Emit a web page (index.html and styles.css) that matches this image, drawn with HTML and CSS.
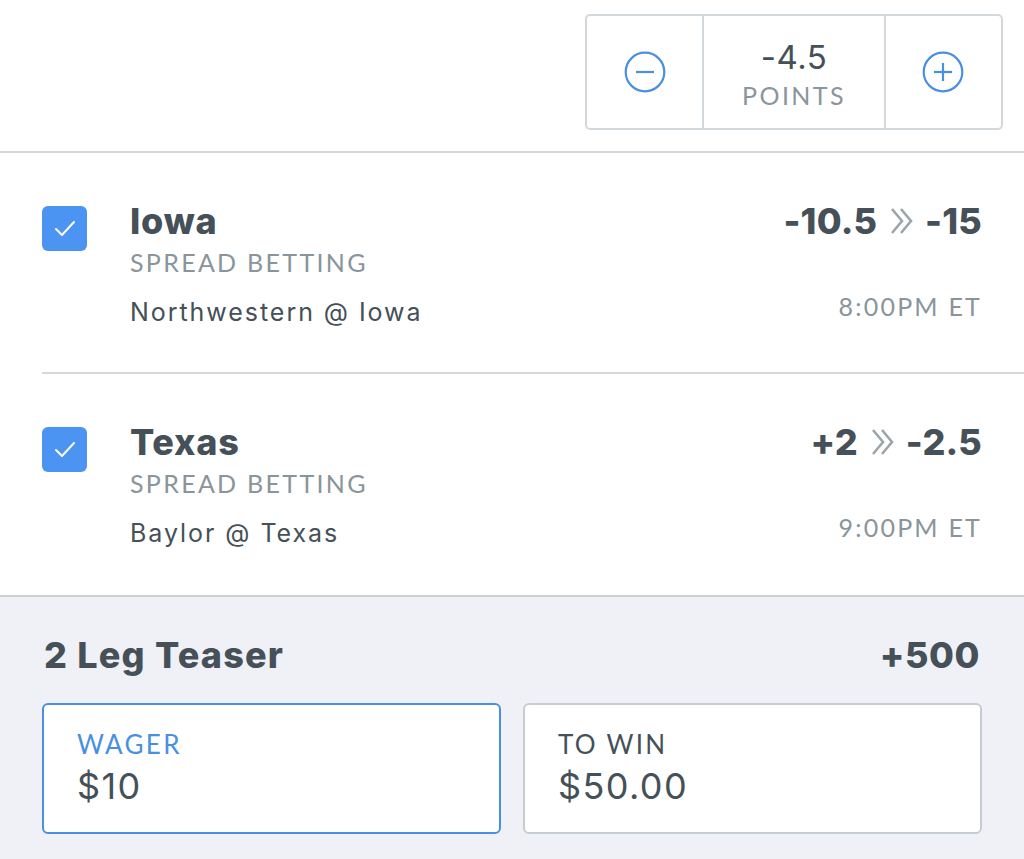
FILE: index.html
```html
<!DOCTYPE html>
<html>
<head>
<meta charset="utf-8">
<link rel="stylesheet" href="styles.css">
</head>
<body>
<div class="page">
  <header class="top">
    <div class="stepper">
      <div class="step-btn">
        <svg width="42" height="42" viewBox="0 0 42 42"><circle cx="21" cy="21" r="19.3" fill="none" stroke="#4a90e2" stroke-width="2.2"/><line x1="12" y1="21" x2="30" y2="21" stroke="#4a90e2" stroke-width="2.2"/></svg>
      </div>
      <div class="step-value">
        <div class="step-num">-4.5</div>
        <div class="step-label">POINTS</div>
      </div>
      <div class="step-btn">
        <svg width="42" height="42" viewBox="0 0 42 42"><circle cx="21" cy="21" r="19.3" fill="none" stroke="#4a90e2" stroke-width="2.2"/><line x1="12" y1="21" x2="30" y2="21" stroke="#4a90e2" stroke-width="2.2"/><line x1="21" y1="12" x2="21" y2="30" stroke="#4a90e2" stroke-width="2.2"/></svg>
      </div>
    </div>
  </header>

  <section class="legs">
    <div class="leg leg-first">
      <div class="check"><svg width="22" height="18" viewBox="0 0 22 18"><polyline points="2,9 8,15 20,2" fill="none" stroke="#fff" stroke-width="2" stroke-linecap="round" stroke-linejoin="round"/></svg></div>
      <div class="leg-info">
        <div class="leg-team">Iowa</div>
        <div class="leg-type">SPREAD BETTING</div>
        <div class="leg-match">Northwestern @ Iowa</div>
      </div>
      <div class="leg-right">
        <div class="leg-odds">-10.5<svg class="chev" width="30" height="30" viewBox="0 0 30 30"><polyline points="5,3 15,15 5,27" fill="none" stroke="#9ba5ab" stroke-width="2.6"/><polyline points="14,3 24,15 14,27" fill="none" stroke="#9ba5ab" stroke-width="2.6"/></svg>-15</div>
        <div class="leg-time">8:00PM ET</div>
      </div>
    </div>
    <div class="leg">
      <div class="check"><svg width="22" height="18" viewBox="0 0 22 18"><polyline points="2,9 8,15 20,2" fill="none" stroke="#fff" stroke-width="2" stroke-linecap="round" stroke-linejoin="round"/></svg></div>
      <div class="leg-info">
        <div class="leg-team">Texas</div>
        <div class="leg-type">SPREAD BETTING</div>
        <div class="leg-match">Baylor @ Texas</div>
      </div>
      <div class="leg-right">
        <div class="leg-odds">+2<svg class="chev" width="30" height="30" viewBox="0 0 30 30"><polyline points="5,3 15,15 5,27" fill="none" stroke="#9ba5ab" stroke-width="2.6"/><polyline points="14,3 24,15 14,27" fill="none" stroke="#9ba5ab" stroke-width="2.6"/></svg>-2.5</div>
        <div class="leg-time">9:00PM ET</div>
      </div>
    </div>
  </section>

  <section class="summary">
    <div class="summary-head">
      <div class="summary-title">2 Leg Teaser</div>
      <div class="summary-odds">+500</div>
    </div>
    <div class="fields">
      <div class="field field-active">
        <div class="field-label">WAGER</div>
        <div class="field-value">$10</div>
      </div>
      <div class="field">
        <div class="field-label">TO WIN</div>
        <div class="field-value">$50.00</div>
      </div>
    </div>
  </section>
</div>
</body>
</html>
```
FILE: styles.css
```css
* { box-sizing: border-box; }
html, body { margin: 0; padding: 0; background: #fff; }
body {
  font-family: "Inter", "Liberation Sans", sans-serif;
  color: #455058;
  width: 1024px;
  height: 859px;
  overflow: hidden;
}
.page { display: flex; flex-direction: column; height: 859px; }

.step-label, .leg-type, .leg-time, .field-label {
  font-family: "Lato", "Liberation Sans", sans-serif;
}

.top {
  height: 153px;
  border-bottom: 2px solid #d3d8dc;
  display: flex;
  justify-content: flex-end;
  padding: 14px 21px 0 0;
}
.stepper {
  width: 418px;
  height: 116px;
  border: 2px solid #d3d8dc;
  border-radius: 5px;
  display: flex;
}
.step-btn {
  width: 116px;
  display: flex;
  align-items: center;
  justify-content: center;
}
.step-value {
  width: 184px;
  border-left: 2px solid #d3d8dc;
  border-right: 2px solid #d3d8dc;
  text-align: center;
  padding-top: 21px;
}
.step-num { font-size: 33px; line-height: 40px; color: #455058; letter-spacing: 0.5px; }
.step-label { font-size: 25px; line-height: 30px; letter-spacing: 2.4px; color: #8a959c; margin-top: 3px; }

.legs { padding-left: 42px; }
.leg {
  height: 221px;
  display: flex;
  padding: 48px 42px 0 0;
}
.leg-first { border-bottom: 2px solid #d3d8dc; }
.check {
  width: 45px;
  height: 45px;
  margin-top: 5px;
  border-radius: 6px;
  background: #4b94f1;
  display: flex;
  align-items: center;
  justify-content: center;
}
.leg-info { margin-left: 43px; flex: 1; }
.leg-team { font-size: 36px; line-height: 40px; font-weight: 800; color: #455058; letter-spacing: 0.8px; }
.leg-type { font-size: 25px; line-height: 30px; letter-spacing: 2.3px; color: #89949b; margin-top: 6px; }
.leg-match { font-size: 25px; line-height: 34px; color: #455058; margin-top: 18px; letter-spacing: 1.95px; }
.leg-right { text-align: right; }
.leg-odds {
  font-size: 36px; line-height: 40px; font-weight: 800; color: #455058;
  display: flex; align-items: center; justify-content: flex-end;
  letter-spacing: 0.2px;
}
.chev { margin: 0 8px 0 10px; }
.leg-time { font-size: 25px; line-height: 30px; letter-spacing: 2.2px; color: #89949b; margin-top: 50px; }

.summary {
  flex: 1;
  background: #eff1f6;
  border-top: 2px solid #c9d0d6;
  padding: 38px 42px 0 42px;
}
.summary-head { display: flex; justify-content: space-between; padding: 0 2px 0 2px; }
.summary-title, .summary-odds { font-size: 36px; line-height: 40px; font-weight: 800; color: #455058; letter-spacing: 1.2px; }
.summary-odds { letter-spacing: 0.6px; }
.fields { display: flex; gap: 22px; margin-top: 28px; }
.field {
  flex: 1;
  height: 131px;
  background: #fff;
  border: 2px solid #c5ccd2;
  border-radius: 6px;
  padding: 24px 0 0 33px;
}
.field-active { border-color: #4a90e2; }
.field-label { font-size: 26px; line-height: 30px; letter-spacing: 2.3px; color: #455058; }
.field-active .field-label { color: #4a90e2; }
.field-value { font-size: 36px; line-height: 44px; color: #455058; margin-top: 5px; letter-spacing: 1.4px; }
```
